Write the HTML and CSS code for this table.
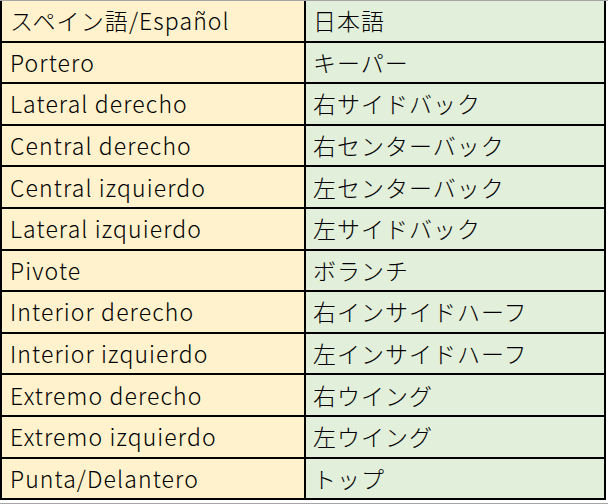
FILE: index.html
```html
<!DOCTYPE html>
<html lang="ja">
<head>
<meta charset="utf-8">
<title>Posiciones</title>
<link rel="stylesheet" href="styles.css">
</head>
<body>
<div class="sheet">
  <div class="grid">
    <div class="cell es">スペイン語/Español</div><div class="cell ja">日本語</div>
    <div class="cell es">Portero</div><div class="cell ja">キーパー</div>
    <div class="cell es">Lateral derecho</div><div class="cell ja">右サイドバック</div>
    <div class="cell es">Central derecho</div><div class="cell ja">右センターバック</div>
    <div class="cell es">Central izquierdo</div><div class="cell ja">左センターバック</div>
    <div class="cell es">Lateral izquierdo</div><div class="cell ja">左サイドバック</div>
    <div class="cell es">Pivote</div><div class="cell ja">ボランチ</div>
    <div class="cell es">Interior derecho</div><div class="cell ja">右インサイドハーフ</div>
    <div class="cell es">Interior izquierdo</div><div class="cell ja">左インサイドハーフ</div>
    <div class="cell es">Extremo derecho</div><div class="cell ja">右ウイング</div>
    <div class="cell es">Extremo izquierdo</div><div class="cell ja">左ウイング</div>
    <div class="cell es">Punta/Delantero</div><div class="cell ja">トップ</div>
  </div>
</div>
</body>
</html>
```
FILE: styles.css
```css
html, body {
  margin: 0;
  padding: 0;
  background: #ffffff;
}
.sheet {
  width: 608px;
  height: 504px;
  box-sizing: border-box;
  border-top: 1px solid #a6a6a6;
  border-bottom: 1px solid #a6a6a6;
  overflow: hidden;
}
.grid {
  display: grid;
  grid-template-columns: 306px 300px;
  grid-auto-rows: 41.6px;
}
.cell {
  box-sizing: border-box;
  display: flex;
  align-items: center;
  border-bottom: 2px solid #000;
  border-right: 2px solid #000;
  font-family: "Noto Sans CJK JP", "Noto Sans", sans-serif;
  font-size: 23px;
  font-weight: 300;
  color: #000;
  white-space: nowrap;
  padding-bottom: 1px;
}
.es {
  background: #fff2cc;
  border-left: 2px solid #000;
  padding-left: 8px;
  letter-spacing: 1.1px;
}
.ja {
  background: #e2efda;
  padding-left: 7px;
  letter-spacing: 1px;
}
```
